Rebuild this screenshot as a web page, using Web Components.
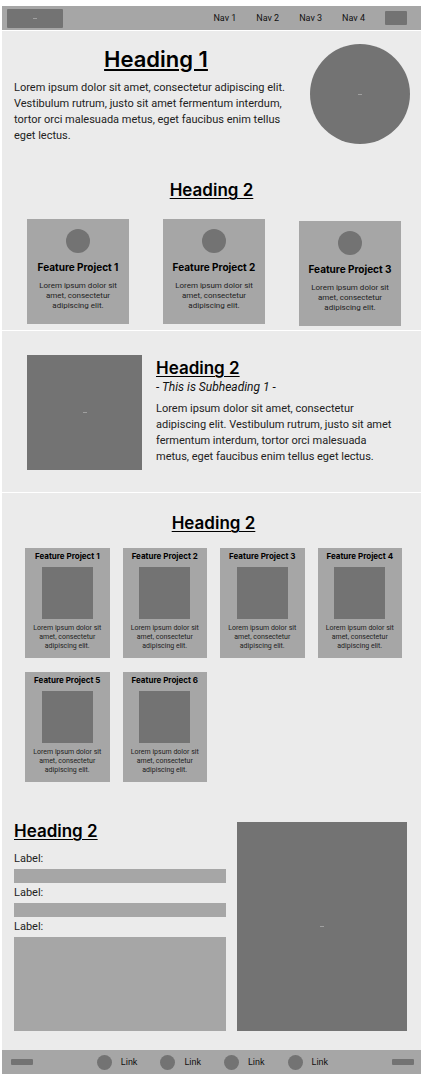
<!DOCTYPE html>
<html lang="en">
<head>
<meta charset="utf-8">
<meta name="viewport" content="width=device-width, initial-scale=1">
<title>Portfolio wireframe</title>
<style>
  :root {
    --page: #ebebeb;
    --panel: #a6a6a6;
    --block: #737373;
    --mark: #a0a0a0;
    --heading: Inter, "Noto Sans", sans-serif;
    --text: Roboto, "Noto Sans", sans-serif;
  }
  body { margin: 6px 0 6px 2px; background: #fff; color: #000; font-family: var(--text); }
</style>
</head>
<body>
<wire-page></wire-page>

<script>
class WireElement extends HTMLElement {
  constructor() {
    super();
    this.attachShadow({ mode: 'open' }).innerHTML =
      '<style>*{box-sizing:border-box}:host{display:block;box-sizing:border-box}' +
      this.constructor.css + '</style>' + this.constructor.html;
  }
}

/* Grey stand-in for a picture, sized by its parent */
customElements.define('wire-block', class extends WireElement {
  static css = `
    :host { display: flex; align-items: center; justify-content: center; background: var(--block); flex: none; }
    :host([round]) { border-radius: 50%; }
    :host([marked])::after { content: ""; width: 4px; height: 1px; background: var(--mark); }
  `;
  static html = '';
});

customElements.define('wire-heading', class extends WireElement {
  static css = `
    h2 { margin: 0; font: 600 17px/24px var(--heading); text-decoration: underline 1px; text-underline-offset: 2px; }
  `;
  static html = '<h2><slot></slot></h2>';
});

customElements.define('wire-header', class extends WireElement {
  static css = `
    header { display: flex; align-items: center; height: 24px; padding: 0 14px 0 5px; background: var(--panel); }
    .logo { width: 56px; height: 19px; border-radius: 1px; }
    nav { display: flex; gap: 20px; margin: 0 20px 0 auto; }
    a { color: #111; font-size: 9px; line-height: 12px; text-decoration: none; }
    button { width: 22px; height: 14px; padding: 0; border: 0; border-radius: 1px; background: var(--block); }
  `;
  static html = `
    <header>
      <wire-block class="logo" marked></wire-block>
      <nav><a href="#">Nav 1</a><a href="#">Nav 2</a><a href="#">Nav 3</a><a href="#">Nav 4</a></nav>
      <button type="button" aria-label="Menu"></button>
    </header>`;
});

customElements.define('wire-hero', class extends WireElement {
  static css = `
    :host { display: flex; justify-content: space-between; gap: 12px; padding: 13px 11px 0 12px; }
    .copy { flex: 1; }
    h1 { margin: 0 0 6px; font: 600 22px/30px var(--heading); text-align: center; text-decoration: underline 2px; text-underline-offset: 2px; }
    p { margin: 0; color: #222; font-size: 11px; line-height: 16px; }
    wire-block { width: 100px; height: 100px; }
  `;
  static html = `
    <div class="copy"><h1><slot name="title"></slot></h1><p><slot></slot></p></div>
    <wire-block round marked></wire-block>`;
});

customElements.define('feature-card', class extends WireElement {
  static css = `
    :host { height: 105px; padding-top: 10px; background: var(--panel); text-align: center; }
    wire-block { width: 24px; height: 24px; margin: 0 auto; }
    h3 { margin: 7px 0; font: 700 10px/14px var(--heading); white-space: nowrap; }
    p { width: 86px; margin: 0 auto; color: #222; font-size: 8px; line-height: 10px; }
  `;
  static html = '<wire-block round></wire-block><h3><slot></slot></h3><p>Lorem ipsum dolor sit amet, consectetur adipiscing elit.</p>';
});

customElements.define('project-card', class extends WireElement {
  static css = `
    :host { padding: 3px 0 7px; background: var(--panel); text-align: center; }
    h3 { margin: 0 0 6px; font: 700 8px/10px var(--heading); white-space: nowrap; }
    wire-block { width: 51px; height: 52px; margin: 0 auto 5px; }
    p { width: 72px; margin: 0 auto; color: #222; font-size: 7px; line-height: 9px; }
  `;
  static html = '<h3><slot></slot></h3><wire-block></wire-block><p>Lorem ipsum dolor sit amet, consectetur adipiscing elit.</p>';
});

customElements.define('wire-about', class extends WireElement {
  static css = `
    :host { display: flex; gap: 14px; padding: 24px 20px 22px 25px; }
    wire-block { width: 115px; height: 115px; }
    .copy { flex: 1; padding-top: 1px; }
    .copy .sub { margin: 0 0 7px; font-size: 12px; line-height: 14px; font-style: italic; color: #111; }
    p { margin: 0; color: #222; font-size: 11px; line-height: 16px; }
  `;
  static html = `
    <wire-block marked></wire-block>
    <div class="copy">
      <wire-heading><slot name="title"></slot></wire-heading>
      <p class="sub"><slot name="sub"></slot></p>
      <p><slot></slot></p>
    </div>`;
});

customElements.define('wire-contact', class extends WireElement {
  static css = `
    :host { display: grid; grid-template-columns: 212fr 170fr; gap: 11px; padding: 37px 14px 19px 12px; }
    form { display: flex; flex-direction: column; }
    wire-heading { margin-bottom: 8px; }
    label { font-size: 11px; line-height: 16px; color: #222; margin-bottom: 2px; }
    input, textarea { display: block; width: 100%; margin: 0 0 2px; padding: 0 4px; border: 0; border-radius: 0; background: var(--panel); font: 10px/14px var(--text); resize: none; }
    input { height: 14px; }
    textarea { height: 94px; margin: 0; }
    wire-block { margin-top: 3px; }
  `;
  static html = `
    <form>
      <wire-heading>Heading 2</wire-heading>
      <label for="name">Label:</label><input id="name" type="text">
      <label for="mail">Label:</label><input id="mail" type="text">
      <label for="message">Label:</label><textarea id="message"></textarea>
    </form>
    <wire-block marked></wire-block>`;
});

customElements.define('wire-footer', class extends WireElement {
  static css = `
    footer { display: flex; align-items: center; justify-content: space-between; height: 24px; padding: 0 7px 0 9px; background: var(--panel); }
    .bar { width: 22px; height: 6px; border-radius: 1px; }
    nav { display: flex; gap: 23px; }
    a { display: flex; align-items: center; gap: 9px; color: #111; font-size: 9px; line-height: 12px; text-decoration: none; }
    a wire-block { width: 15px; height: 15px; }
  `;
  static html = `
    <footer>
      <wire-block class="bar"></wire-block>
      <nav>${'<a href="#"><wire-block round></wire-block>Link</a>'.repeat(4)}</nav>
      <wire-block class="bar"></wire-block>
    </footer>`;
});

customElements.define('wire-page', class extends WireElement {
  static css = `
    :host { background: var(--page); }
    wire-header, .intro, wire-about { border-bottom: 1px solid #fff; }
    .centred { text-align: center; }
    .intro { padding-bottom: 4px; }
    .intro .centred { margin: 34px 0 17px; }
    .features { display: grid; grid-template-columns: repeat(3, 1fr); gap: 34px; padding: 0 20px 0 25px; }
    .features :last-child { margin-top: 2px; }
    .projects { padding: 18px 19px 0 23px; }
    .projects .centred { margin-bottom: 13px; }
    .grid { display: grid; grid-template-columns: repeat(4, 1fr); gap: 14px 13px; }
  `;
  static html = `
    <wire-header></wire-header>
    <main>
      <section class="intro">
        <wire-hero><span slot="title">Heading 1</span>Lorem ipsum dolor sit amet, consectetur adipiscing elit. Vestibulum rutrum, justo sit amet fermentum interdum, tortor orci malesuada metus, eget faucibus enim tellus eget lectus.</wire-hero>
        <wire-heading class="centred">Heading 2</wire-heading>
        <div class="features">
          <feature-card>Feature Project 1</feature-card>
          <feature-card>Feature Project 2</feature-card>
          <feature-card>Feature Project 3</feature-card>
        </div>
      </section>
      <wire-about><span slot="title">Heading 2</span><span slot="sub">- This is Subheading 1 -</span>Lorem ipsum dolor sit amet, consectetur adipiscing elit. Vestibulum rutrum, justo sit amet fermentum interdum, tortor orci malesuada metus, eget faucibus enim tellus eget lectus.</wire-about>
      <section class="projects">
        <wire-heading class="centred">Heading 2</wire-heading>
        <div class="grid">
          ${[1, 2, 3, 4, 5, 6].map(n => `<project-card>Feature Project ${n}</project-card>`).join('')}
        </div>
      </section>
      <wire-contact></wire-contact>
    </main>
    <wire-footer></wire-footer>`;
});
</script>
</body>
</html>
